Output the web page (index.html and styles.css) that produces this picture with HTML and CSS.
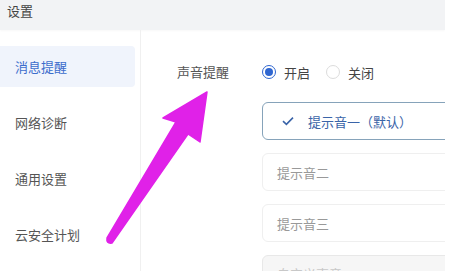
FILE: index.html
```html
<!DOCTYPE html>
<html lang="zh">
<head>
<meta charset="utf-8">
<link rel="stylesheet" href="styles.css">
</head>
<body>
<div class="app">
  <div class="header">设置</div>
  <div class="main">
    <nav class="sidebar">
      <div class="nav-item active">消息提醒</div>
      <div class="nav-item">网络诊断</div>
      <div class="nav-item">通用设置</div>
      <div class="nav-item">云安全计划</div>
    </nav>
    <section class="content">
      <div class="label">声音提醒</div>
      <div class="options">
        <div class="radios">
          <span class="radio checked"></span><span class="radio-text">开启</span>
          <span class="radio"></span><span class="radio-text">关闭</span>
        </div>
        <div class="cards">
          <div class="card selected">
            <svg class="check" viewBox="0 0 12 10" width="12" height="10"><path d="M1 5.2 L4.4 8.4 L11 1.6" fill="none" stroke="#3a64a8" stroke-width="1.6"/></svg>
            <span>提示音一（默认）</span>
          </div>
          <div class="card">提示音二</div>
          <div class="card">提示音三</div>
          <div class="card disabled">自定义声音</div>
        </div>
      </div>
    </section>
  </div>
</div>
<svg class="arrow" width="457" height="271" viewBox="0 0 457 271">
  <path d="M207 92 L163 118 L176 122 L107 238 Q106 244 112 243 L188 134 L200 142 Z" fill="#e021e8" stroke="#e021e8" stroke-width="1.5" stroke-linejoin="round"/>
</svg>
</body>
</html>
```

FILE: styles.css
```css
html, body {
  margin: 0;
  padding: 0;
  background: #fff;
}
body {
  width: 457px;
  height: 271px;
  overflow: hidden;
  position: relative;
  font-family: "Noto Sans CJK SC", "Noto Sans", sans-serif;
  font-size: 13px;
  color: #444;
}
.app {
  width: 445px;
  height: 271px;
  overflow: hidden;
  display: flex;
  flex-direction: column;
}
.header {
  height: 30px;
  line-height: 22px;
  padding-left: 7px;
  background: #f2f3f5;
  color: #444;
  box-shadow: 0 1px 2px rgba(0,0,0,0.03);
  flex: none;
}
.main {
  flex: 1;
  display: flex;
}
.sidebar {
  width: 135px;
  padding: 16px 5px 0 0;
  border-right: 1px solid #f0f0f0;
  flex: none;
}
.nav-item {
  height: 41px;
  line-height: 41px;
  padding-left: 15px;
  margin-bottom: 15px;
  color: #555;
  border-radius: 0 4px 4px 0;
}
.nav-item.active {
  background: #f0f4fc;
  color: #3c6dcc;
}
.content {
  flex: 1;
  display: grid;
  grid-template-columns: 85px 1fr;
  padding: 31px 0 0 36px;
  align-items: start;
}
.label {
  line-height: 22px;
  color: #555;
}
.radios {
  height: 22px;
  display: flex;
  align-items: center;
  color: #444;
}
.radio {
  box-sizing: border-box;
  width: 14px;
  height: 14px;
  border-radius: 50%;
  border: 1px solid #dcdcdc;
  display: inline-flex;
  align-items: center;
  justify-content: center;
  margin-right: 8px;
}
.radio.checked {
  border-color: #2f66d0;
}
.radio.checked::after {
  content: "";
  width: 8px;
  height: 8px;
  border-radius: 50%;
  background: #2f66d0;
}
.radio-text {
  margin-right: 16px;
}
.cards {
  margin-top: 19px;
  display: flex;
  flex-direction: column;
  gap: 13px;
  width: 240px;
}
.card {
  box-sizing: border-box;
  height: 38px;
  border: 1px solid #efefef;
  border-radius: 6px;
  padding-left: 14px;
  display: flex;
  align-items: center;
  color: #999;
}
.card.selected {
  border-color: #86a3ba;
  color: #3a64a8;
  padding-left: 19px;
}
.check {
  margin-right: 14px;
}
.card.disabled {
  background: #f6f6f6;
  border-color: #e8e8e8;
  color: #c8c8c8;
  align-items: flex-start;
  padding-top: 8px;
}
.arrow {
  position: absolute;
  left: 0;
  top: 0;
  pointer-events: none;
}
```
